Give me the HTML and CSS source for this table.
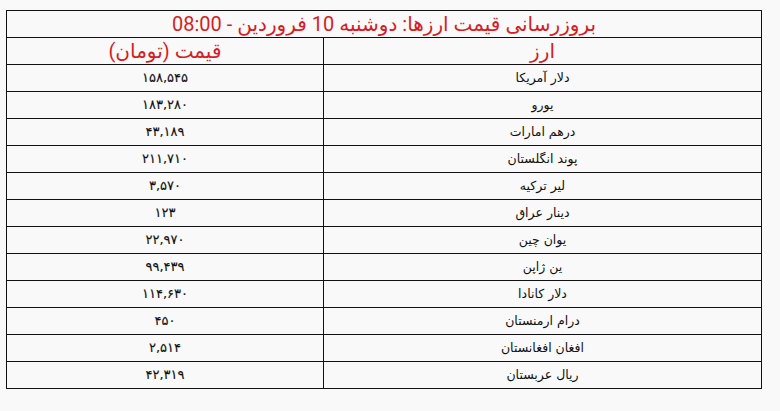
FILE: index.html
```html
<!DOCTYPE html>
<html lang="fa" dir="rtl">
<head>
<meta charset="utf-8">
<title>قیمت ارز</title>
<link rel="stylesheet" href="styles.css">
</head>
<body>
<table class="rates">
  <colgroup><col class="col-name"><col class="col-price"></colgroup>
  <thead>
    <tr><th class="title" colspan="2">بروزرسانی قیمت ارزها: دوشنبه 10 فروردین - 08:00</th></tr>
    <tr><th class="head">ارز</th><th class="head">قیمت (تومان)</th></tr>
  </thead>
  <tbody>
    <tr><td>دلار آمریکا</td><td class="num">۱۵۸,۵۴۵</td></tr>
    <tr><td>یورو</td><td class="num">۱۸۳,۲۸۰</td></tr>
    <tr><td>درهم امارات</td><td class="num">۴۳,۱۸۹</td></tr>
    <tr><td>پوند انگلستان</td><td class="num">۲۱۱,۷۱۰</td></tr>
    <tr><td>لیر ترکیه</td><td class="num">۳,۵۷۰</td></tr>
    <tr><td>دینار عراق</td><td class="num">۱۲۳</td></tr>
    <tr><td>یوان چین</td><td class="num">۲۲,۹۷۰</td></tr>
    <tr><td>ین ژاپن</td><td class="num">۹۹,۴۳۹</td></tr>
    <tr><td>دلار کانادا</td><td class="num">۱۱۴,۶۳۰</td></tr>
    <tr><td>درام ارمنستان</td><td class="num">۴۵۰</td></tr>
    <tr><td>افغان افغانستان</td><td class="num">۲,۵۱۴</td></tr>
    <tr><td>ریال عربستان</td><td class="num">۴۲,۳۱۹</td></tr>
  </tbody>
</table>
</body>
</html>
```
FILE: styles.css
```css
html, body {
  margin: 0;
  background: #f9f9f9;
}
body {
  padding: 10px 18px 0 7px;
  font-family: "DejaVu Sans", "Noto Sans", sans-serif;
  color: #111;
}
.rates {
  width: 755px;
  border-collapse: collapse;
  table-layout: fixed;
}
.col-name { width: 438px; }
.col-price { width: 317px; }
.rates th, .rates td {
  border: 1px solid #111;
  text-align: center;
  padding: 0;
  height: 26px;
  vertical-align: middle;
}
.rates .title, .rates .head {
  font-family: "Roboto", "DejaVu Sans", sans-serif;
  font-weight: normal;
  color: #d81c22;
  font-size: 20px;
  line-height: 26px;
}
.rates td {
  font-size: 12.5px;
  line-height: 26px;
}
.rates .num {
  font-size: 13px;
  -webkit-text-stroke: 0.15px #111;
}
```
